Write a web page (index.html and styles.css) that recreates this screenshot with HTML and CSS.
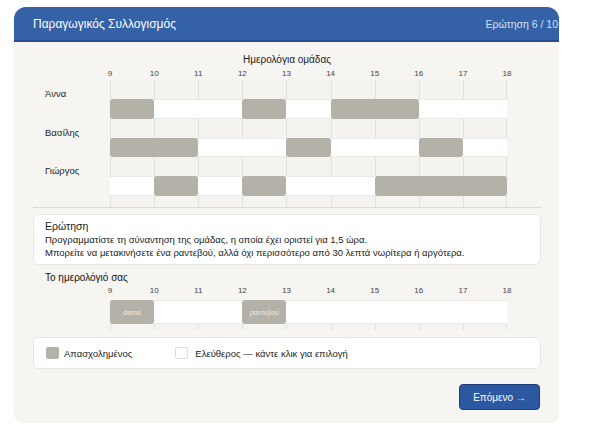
FILE: index.html
```html
<!DOCTYPE html>
<html lang="el">
<head>
    <meta charset="UTF-8">
    <meta name="viewport" content="width=device-width, initial-scale=1.0">
    <title>Παραγωγικός Συλλογισμός</title>
    <link rel="stylesheet" href="styles.css">
</head>
<body>
    <div class="card">
        <div class="header">
            <span class="title">Παραγωγικός Συλλογισμός</span>
            <span class="counter">Ερώτηση 6 / 10</span>
        </div>
        <div class="content">
            <div class="chart-title">Ημερολόγια ομάδας</div>

            <div class="chart">
                <div class="hours">
                    <span>9</span><span>10</span><span>11</span><span>12</span><span>13</span>
                    <span>14</span><span>15</span><span>16</span><span>17</span><span>18</span>
                </div>

                <!-- Άννα -->
                <div class="name-row">
                    <span class="name">Άννα</span>
                    <div class="cells"><i></i><i></i><i></i><i></i><i></i><i></i><i></i><i></i><i></i></div>
                </div>
                <div class="bar-row">
                    <div class="track">
                        <div class="busy" style="grid-column: 1 / 2"></div>
                        <div class="busy" style="grid-column: 4 / 5"></div>
                        <div class="busy" style="grid-column: 6 / 8"></div>
                    </div>
                </div>

                <!-- Βασίλης -->
                <div class="name-row">
                    <span class="name">Βασίλης</span>
                    <div class="cells"><i></i><i></i><i></i><i></i><i></i><i></i><i></i><i></i><i></i></div>
                </div>
                <div class="bar-row">
                    <div class="track">
                        <div class="busy" style="grid-column: 1 / 3"></div>
                        <div class="busy" style="grid-column: 5 / 6"></div>
                        <div class="busy" style="grid-column: 8 / 9"></div>
                    </div>
                </div>

                <!-- Γιώργος -->
                <div class="name-row">
                    <span class="name">Γιώργος</span>
                    <div class="cells"><i></i><i></i><i></i><i></i><i></i><i></i><i></i><i></i><i></i></div>
                </div>
                <div class="bar-row">
                    <div class="track">
                        <div class="busy" style="grid-column: 2 / 3"></div>
                        <div class="busy" style="grid-column: 4 / 5"></div>
                        <div class="busy" style="grid-column: 7 / 10"></div>
                    </div>
                </div>

                <div class="name-row stub">
                    <span class="name"></span>
                    <div class="cells"><i></i><i></i><i></i><i></i><i></i><i></i><i></i><i></i><i></i></div>
                </div>
            </div>

            <div class="separator"></div>

            <div class="question">
                <div class="q-title">Ερώτηση</div>
                <p>Προγραμματίστε τη σύναντηση της ομάδας, η οποία έχει οριστεί για 1,5 ώρα.</p>
                <p>Μπορείτε να μετακινήσετε ένα ραντεβού, αλλά όχι περισσότερο από 30 λεπτά νωρίτερα ή αργότερα.</p>
            </div>

            <div class="my-title">Το ημερολόγιό σας</div>

            <div class="chart mine">
                <div class="hours">
                    <span>9</span><span>10</span><span>11</span><span>12</span><span>13</span>
                    <span>14</span><span>15</span><span>16</span><span>17</span><span>18</span>
                </div>
                <div class="bar-row">
                    <div class="track">
                        <div class="busy" style="grid-column: 1 / 2">demo</div>
                        <div class="busy" style="grid-column: 4 / 5">ραντεβού</div>
                    </div>
                </div>
                <div class="name-row stub">
                    <span class="name"></span>
                    <div class="cells"><i></i><i></i><i></i><i></i><i></i><i></i><i></i><i></i><i></i></div>
                </div>
            </div>

            <div class="legend">
                <div class="legend-item"><span class="swatch busy-swatch"></span>Απασχολημένος</div>
                <div class="legend-item"><span class="swatch free-swatch"></span>Ελεύθερος — κάντε κλικ για επιλογή</div>
            </div>

            <div class="actions">
                <button type="button" class="next-btn">Επόμενο →</button>
            </div>
        </div>
    </div>
</body>
</html>
```

FILE: styles.css
```css
*{
    margin: 0;
    padding: 0;
    box-sizing: border-box;
    font-family: 'Liberation Sans', Arial, sans-serif;
}
body{
    background: #fff;
    padding: 7px 0 0 14px;
}
.card{
    width: 545px;
    height: 416px;
    background: #f6f5f2;
    border-radius: 12px 12px 10px 10px;
    overflow: hidden;
    box-shadow: 0 0 2px rgba(0, 0, 0, 0.06);
}
.header{
    display: flex;
    justify-content: space-between;
    align-items: center;
    height: 35px;
    padding: 0 1px 0 19px;
    background: #3561a6;
    border-bottom: 2px solid #264c8c;
    white-space: nowrap;
}
.header .title{
    color: #fff;
    font-size: 12px;
}
.header .counter{
    color: #d3e1f5;
    font-size: 10.5px;
}
.content{
    padding: 12px 18px 0 19px;
}
.chart-title{
    text-align: center;
    font-size: 10px;
    line-height: 12px;
    color: #222;
}

/* ------------- chart ------------- */
.chart{
    width: 474px;
}
.hours{
    display: flex;
    margin: 3px 0 0 55px;
    height: 11px;
}
.hours span{
    flex: none;
    width: 44.11px;
    text-align: center;
    font-size: 8px;
    line-height: 10px;
    color: #444;
}
.name-row{
    display: grid;
    grid-template-columns: 77px 1fr;
    height: 19px;
}
.name-row .name{
    align-self: end;
    padding-left: 12px;
    font-size: 9.5px;
    line-height: 11px;
    color: #222;
}
.cells{
    display: grid;
    grid-template-columns: repeat(9, 1fr);
}
.cells i{
    border-left: 1px solid #e2e0db;
    background: #f4f3f0;
}
.cells i:last-child{
    border-right: 1px solid #e2e0db;
}
.name-row.stub{
    height: 11px;
}
.bar-row{
    display: grid;
    grid-template-columns: 77px 1fr;
    height: 19.5px;
}
.track{
    grid-column: 2;
    display: grid;
    grid-template-columns: repeat(9, 1fr);
    background: #fff;
    border-top: 1px solid #ebe9e5;
    border-bottom: 1px solid #ebe9e5;
}
.busy{
    grid-row: 1;
    background: #b4b1a9;
    border-radius: 3px;
    margin: -1px 0;
    color: #ece9e3;
    font-size: 7px;
    display: flex;
    align-items: center;
    justify-content: center;
}
.mine .hours{
    margin-top: 2px;
    margin-bottom: 3px;
}
.mine .bar-row{
    height: 24px;
}
.mine .name-row.stub{
    height: 6px;
}

.separator{
    height: 1px;
    background: #dcdad5;
    margin-top: 0.5px;
}

/* ------------- question ------------- */
.question{
    margin-top: 6px;
    background: #fff;
    border: 1px solid #e8e6e1;
    border-radius: 6px;
    padding: 5px 11px 5px 11px;
    color: #222;
}
.question .q-title{
    font-size: 10.5px;
    line-height: 13px;
}
.question p{
    font-size: 9.5px;
    line-height: 13px;
}
.my-title{
    margin-top: 6px;
    padding-left: 12px;
    font-size: 10px;
    line-height: 13px;
    color: #111;
}

/* ------------- legend ------------- */
.legend{
    display: flex;
    align-items: center;
    gap: 43px;
    margin-top: 7px;
    height: 32px;
    padding-left: 12px;
    background: #fff;
    border: 1px solid #e8e6e1;
    border-radius: 5px;
}
.legend-item{
    display: flex;
    align-items: center;
    font-size: 9.5px;
    color: #222;
}
.swatch{
    width: 13px;
    height: 12px;
    border-radius: 2px;
    margin-right: 5px;
}
.busy-swatch{
    background: #b4b1a9;
}
.free-swatch{
    background: #fff;
    border: 1px solid #dedcd7;
    margin-right: 7px;
}

/* ------------- button ------------- */
.actions{
    display: flex;
    justify-content: flex-end;
    margin-top: 15px;
    padding-right: 1px;
}
.next-btn{
    width: 81px;
    height: 26px;
    background: #2c57a1;
    border: 1px solid #1d3f7d;
    border-radius: 4px;
    color: #fff;
    font-size: 10px;
}
```
